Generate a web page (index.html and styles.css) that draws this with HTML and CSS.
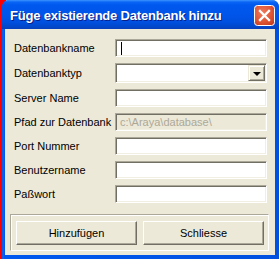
FILE: index.html
```html
<!DOCTYPE html>
<html lang="de">
  <head>
    <meta charset="UTF-8" />
    <title>Füge existierende Datenbank hinzu</title>
    <link rel="stylesheet" href="styles.css">
  </head>
  <body>
    <div class="window">
      <div class="titlebar">
        <span class="title">Füge existierende Datenbank hinzu</span>
        <button class="close" title="Schliessen">
          <svg width="21" height="21" viewBox="0 0 21 21">
            <defs>
              <radialGradient id="closeFill" cx="0.4" cy="0.35" r="0.8">
                <stop offset="0" stop-color="#ef7a5c" />
                <stop offset="0.6" stop-color="#dd5434" />
                <stop offset="1" stop-color="#c13a1c" />
              </radialGradient>
            </defs>
            <rect x="0.5" y="0.5" width="20" height="20" rx="3" fill="url(#closeFill)" stroke="#ffffff" />
            <path d="M6 6 L15 15 M15 6 L6 15" stroke="#ffffff" stroke-width="2.3" stroke-linecap="square" />
          </svg>
        </button>
      </div>

      <div class="client">
        <div class="form">
          <label>Datenbankname</label>
          <div class="field"><span class="caret"></span></div>

          <label>Datenbanktyp</label>
          <div class="field combo">
            <span class="combo-btn"><span class="arrow"></span></span>
          </div>

          <label>Server Name</label>
          <div class="field"></div>

          <label>Pfad zur Datenbank</label>
          <div class="field disabled">c:\Araya\database\</div>

          <label>Port Nummer</label>
          <div class="field"></div>

          <label>Benutzername</label>
          <div class="field"></div>

          <label>Paßwort</label>
          <div class="field"></div>
        </div>

        <div class="actions">
          <button class="btn">Hinzufügen</button>
          <button class="btn">Schliesse</button>
        </div>
      </div>
    </div>
  </body>
</html>
```

FILE: styles.css
```css
* {
  box-sizing: border-box;
  margin: 0;
  padding: 0;
}

body {
  font-family: 'Liberation Sans', Arial, sans-serif;
  font-size: 11px;
  background: linear-gradient(to right, #ff0000 6px, #ffffff 6px);
  border-left: 2px solid #ff0000;
  height: 259px;
  overflow: hidden;
}

.window {
  width: 277px;
  height: 259px;
  display: flex;
  flex-direction: column;
  background: linear-gradient(to right, #0a4fd6 0, #1a6af0 1px, #0058ee 2px, #0050e0 100%);
  border-radius: 7px 7px 0 0;
  overflow: hidden;
}

.titlebar {
  height: 29px;
  flex: none;
  display: flex;
  align-items: flex-start;
  justify-content: space-between;
  padding: 0 4px 0 8px;
  background: linear-gradient(to bottom, #3d95ff 0, #0a66f5 2px, #0058ee 5px, #0055ea 14px, #0050e0 22px, #0147c9 27px, #0a3fba 29px);
}

.title {
  color: #ffffff;
  font-weight: bold;
  font-size: 13px;
  line-height: 15px;
  margin-top: 8px;
  text-shadow: 1px 1px 0 #0a1e8a;
  letter-spacing: -0.2px;
}

.close {
  width: 21px;
  height: 21px;
  margin-top: 5px;
  border: none;
  background: none;
  display: block;
}

.close svg {
  display: block;
}

.client {
  flex: 1;
  margin: 0 4px 4px 3px;
  background: #ece9d8;
  display: flex;
  flex-direction: column;
}

.form {
  display: grid;
  grid-template-columns: 101px 152px;
  grid-template-rows: 18px 20px 18px 18px 18px 18px 18px;
  row-gap: 6px;
  padding: 10px 8px 0 9px;
  align-items: center;
}

.form label {
  color: #000000;
  white-space: nowrap;
}

.field {
  height: 100%;
  background: #ffffff;
  border: 1px solid;
  border-color: #aca899 #ffffff #ffffff #aca899;
  box-shadow: inset 1px 1px 0 #716f64, inset -1px -1px 0 #f1efe2;
  display: flex;
  align-items: center;
  padding-left: 4px;
}

.caret {
  width: 1px;
  height: 13px;
  background: #000000;
  margin-left: 1px;
}

.field.disabled {
  background: #ece9d8;
  color: #aca899;
  padding-left: 4px;
}

.field.combo {
  justify-content: flex-end;
  padding: 1px;
}

.combo-btn {
  width: 17px;
  height: 16px;
  background: #ece9d8;
  border: 1px solid;
  border-color: #ece9d8 #716f64 #716f64 #ece9d8;
  box-shadow: inset 1px 1px 0 #ffffff, inset -1px -1px 0 #aca899;
  display: flex;
  align-items: center;
  justify-content: center;
}

.arrow {
  width: 0;
  height: 0;
  border-left: 4px solid transparent;
  border-right: 4px solid transparent;
  border-top: 4px solid #000000;
  margin-top: 1px;
}

.actions {
  margin: 11px 6px 0 5px;
  height: 37px;
  border: 1px solid;
  border-color: #aca899 #ffffff #ffffff #aca899;
  box-shadow: inset 1px 1px 0 #ffffff;
  display: flex;
  gap: 6px;
  padding: 6px 3px 5px 5px;
}

.btn {
  width: 121px;
  height: 24px;
  font-family: inherit;
  font-size: 11px;
  color: #000000;
  background: #ece9d8;
  border: 1px solid;
  border-color: #ffffff #716f64 #716f64 #ffffff;
  box-shadow: inset -1px -1px 0 #aca899;
}
```
